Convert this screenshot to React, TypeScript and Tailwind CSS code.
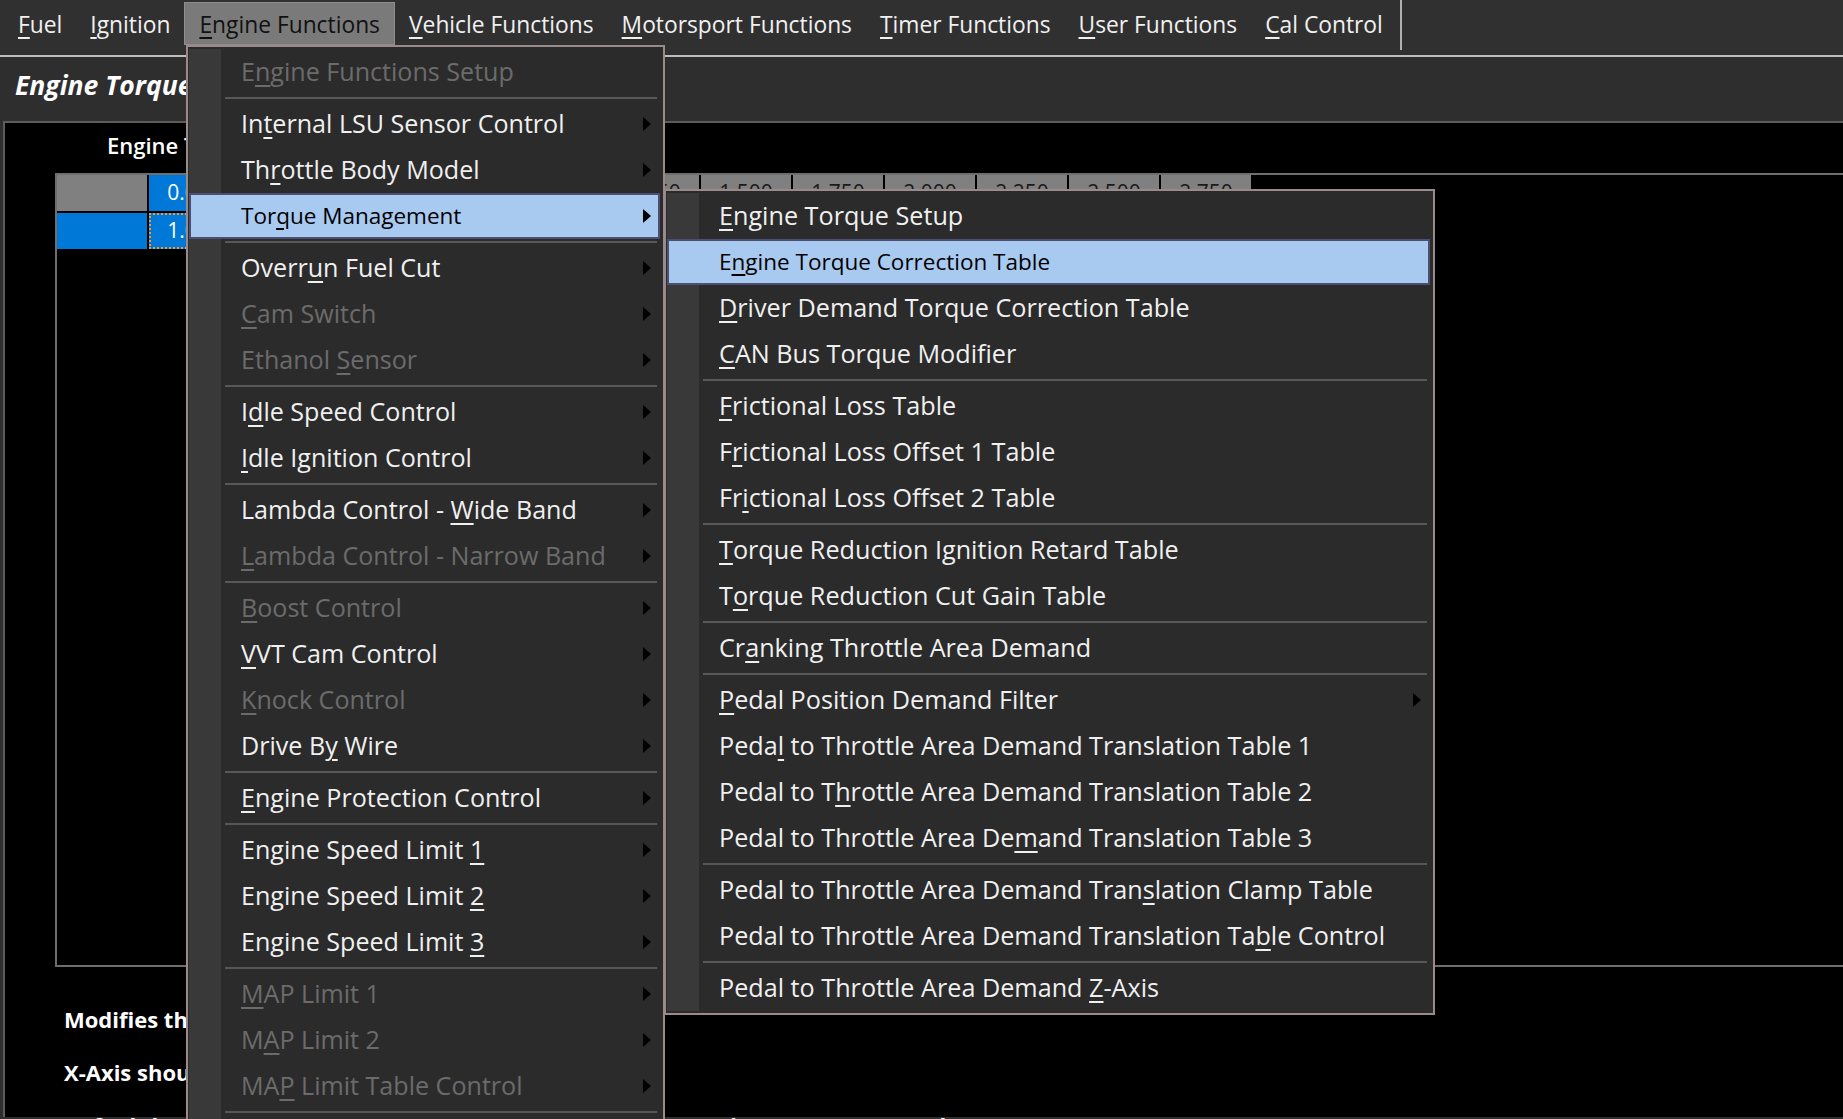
import React from 'react';
import clsx from 'clsx';

type Entry = { t: string; dis?: boolean; sub?: boolean; hi?: boolean } | 'sep';

const barItems = [
  '&Fuel',
  '&Ignition',
  '&Engine Functions',
  '&Vehicle Functions',
  '&Motorsport Functions',
  '&Timer Functions',
  '&User Functions',
  '&Cal Control',
];

const engineMenu: Entry[] = [
  { t: 'E&ngine Functions Setup', dis: true },
  'sep',
  { t: 'In&ternal LSU Sensor Control', sub: true },
  { t: 'Th&rottle Body Model', sub: true },
  { t: 'Tor&que Management', sub: true, hi: true },
  'sep',
  { t: 'Overr&un Fuel Cut', sub: true },
  { t: '&Cam Switch', sub: true, dis: true },
  { t: 'Ethanol &Sensor', sub: true, dis: true },
  'sep',
  { t: 'I&dle Speed Control', sub: true },
  { t: '&Idle Ignition Control', sub: true },
  'sep',
  { t: 'Lambda Control - &Wide Band', sub: true },
  { t: '&Lambda Control - Narrow Band', sub: true, dis: true },
  'sep',
  { t: '&Boost Control', sub: true, dis: true },
  { t: '&VVT Cam Control', sub: true },
  { t: '&Knock Control', sub: true, dis: true },
  { t: 'Drive B&y Wire', sub: true },
  'sep',
  { t: '&Engine Protection Control', sub: true },
  'sep',
  { t: 'Engine Speed Limit &1', sub: true },
  { t: 'Engine Speed Limit &2', sub: true },
  { t: 'Engine Speed Limit &3', sub: true },
  'sep',
  { t: '&MAP Limit 1', sub: true, dis: true },
  { t: 'M&AP Limit 2', sub: true, dis: true },
  { t: 'MA&P Limit Table Control', sub: true, dis: true },
  'sep',
  { t: '&Gear Control', sub: true },
];

const torqueMenu: Entry[] = [
  { t: '&Engine Torque Setup' },
  { t: 'E&ngine Torque Correction Table', hi: true },
  { t: '&Driver Demand Torque Correction Table' },
  { t: '&CAN Bus Torque Modifier' },
  'sep',
  { t: '&Frictional Loss Table' },
  { t: 'F&rictional Loss Offset 1 Table' },
  { t: 'Fr&ictional Loss Offset 2 Table' },
  'sep',
  { t: '&Torque Reduction Ignition Retard Table' },
  { t: 'T&orque Reduction Cut Gain Table' },
  'sep',
  { t: 'Cr&anking Throttle Area Demand' },
  'sep',
  { t: '&Pedal Position Demand Filter', sub: true },
  { t: 'Peda&l to Throttle Area Demand Translation Table 1' },
  { t: 'Pedal to T&hrottle Area Demand Translation Table 2' },
  { t: 'Pedal to Throttle Area De&mand Translation Table 3' },
  'sep',
  { t: 'Pedal to Throttle Area Demand Tran&slation Clamp Table' },
  { t: 'Pedal to Throttle Area Demand Translation Ta&ble Control' },
  'sep',
  { t: 'Pedal to Throttle Area Demand &Z-Axis' },
];

const axis = ['0.000', '0.250', '0.500', '0.750', '1.000', '1.250', '1.500', '1.750', '2.000', '2.250', '2.500', '2.750'];

// text with a Windows style "&" mnemonic
const Label = ({ t }: { t: string }) => {
  const i = t.indexOf('&');
  if (i < 0) return <>{t}</>;
  return (
    <>
      {t.slice(0, i)}
      <span className="underline decoration-[1.5px] underline-offset-[4px]">{t[i + 1]}</span>
      {t.slice(i + 2)}
    </>
  );
};

const Arrow = () => (
  <svg width="8" height="14" viewBox="0 0 8 14" className="shrink-0">
    <path d="M0 0L8 7L0 14Z" fill="#000" />
  </svg>
);

const Menu = ({ items, className, textClass }: { items: Entry[]; className: string; textClass: string }) => (
  <div className={clsx('absolute border-2 border-[#9b8a8a] bg-[#2b2b2b] py-[2px] pl-[1px] pr-[3px]', className)}>
    {items.map((it, i) =>
      it === 'sep' ? (
        <div key={i} className="flex h-[6px]">
          <div className="w-[32px] shrink-0 bg-[#393939]" />
          <div className="ml-[4px] mr-[3px] flex flex-1 items-center">
            <div className="h-[2px] w-full bg-[#575757]" />
          </div>
        </div>
      ) : (
        <div
          key={i}
          className={clsx('flex h-[46px]', it.hi && 'bg-[#a9caf0] shadow-[inset_0_0_0_2px_#4d4f72]')}
        >
          <div className={clsx('w-[32px] shrink-0', !it.hi && 'bg-[#393939]')} />
          <div className="flex flex-1 items-center justify-between pl-[20px] pr-[9px]">
            <span
              className={clsx(
                'whitespace-nowrap',
                it.hi ? 'text-[22.5px] text-black' : textClass,
                !it.hi && (it.dis ? 'text-[#6b6b6b]' : 'text-[#f0f0f0]')
              )}
            >
              <Label t={it.t} />
            </span>
            {it.sub && <Arrow />}
          </div>
        </div>
      )
    )}
  </div>
);

export default function App() {
  return (
    <div className="relative h-[1119px] w-[1843px] overflow-hidden bg-[#2e2e2e] font-['Open_Sans',sans-serif]">
      {/* menu bar */}
      <div className="flex h-[55px] items-start bg-[#303030] pl-[4px] pt-[2px]">
        {barItems.map((b) => {
          const active = b === '&Engine Functions';
          return (
            <div
              key={b}
              className={clsx(
                'flex h-[43px] items-center whitespace-nowrap px-[14px] pt-[4px] text-[22.8px]',
                active ? 'border border-[#8e8e8e] bg-[#7a7a7a] text-[#111]' : 'text-[#f0f0f0]'
              )}
            >
              <Label t={b} />
            </div>
          );
        })}
        <div className="-mt-[2px] ml-[3px] h-[50px] w-[2px] bg-[#b0b0b0]" />
      </div>
      <div className="h-[2px] bg-[#bdbdbd]" />

      {/* window title */}
      <div className="h-[64px] pl-[15px] pt-[9px]">
        <span className="whitespace-nowrap text-[26.5px] font-bold italic text-white">Engine Torque Correction Table</span>
      </div>

      {/* table panel */}
      <div className="ml-[3px] h-[996px] border-l-2 border-t-2 border-[#5c5c5c] bg-black">
        <div className="h-[50px] pl-[102px] pt-[6px]">
          <span className="whitespace-nowrap text-[22px] font-semibold text-white">Engine Torque Correction</span>
        </div>
        <div className="ml-[50px] h-[794px] w-[1830px] border-2 border-r-0 border-[#6e6e6e]">
          <div className="flex h-[36px] gap-[2px] text-[21px]">
            <div className="w-[90px] shrink-0 bg-[#808080]" />
            {axis.map((v, i) => (
              <div
                key={v}
                className={clsx(
                  'flex w-[90px] shrink-0 items-center justify-center',
                  i === 0 ? 'bg-[#0078d7] text-white' : 'bg-[#808080] text-[#1a1a1a]'
                )}
              >
                {v}
              </div>
            ))}
          </div>
          <div className="mt-[2px] flex h-[36px] gap-[2px] text-[21px]">
            <div className="w-[90px] shrink-0 bg-[#0078d7]" />
            {axis.map((v, i) => (
              <div
                key={v}
                className={clsx(
                  'flex w-[90px] shrink-0 items-center justify-center',
                  i === 0
                    ? 'border-2 border-dotted border-[#f39a3c] bg-[#0078d7] text-white'
                    : 'border-b-2 border-[#6e6e6e] text-white'
                )}
              >
                1.000
              </div>
            ))}
          </div>
        </div>
        <div className="ml-[59px] mt-[26px] text-[22px] font-bold leading-[53px] text-white">
          <div className="whitespace-nowrap">Modifies the engine torque estimate.</div>
          <div className="whitespace-nowrap">X-Axis should be set to a load source.</div>
          <div className="whitespace-nowrap">
            <span className="inline-block w-[627px]">Default load axis is</span>
            <span>Engine Torque Demand</span>
          </div>
        </div>
      </div>

      {/* open menus */}
      <Menu items={engineMenu} className="left-[186px] top-[45px] w-[479px]" textClass="text-[25.1px]" />
      <Menu items={torqueMenu} className="left-[664px] top-[189px] w-[771px]" textClass="text-[25.2px]" />
    </div>
  );
}
